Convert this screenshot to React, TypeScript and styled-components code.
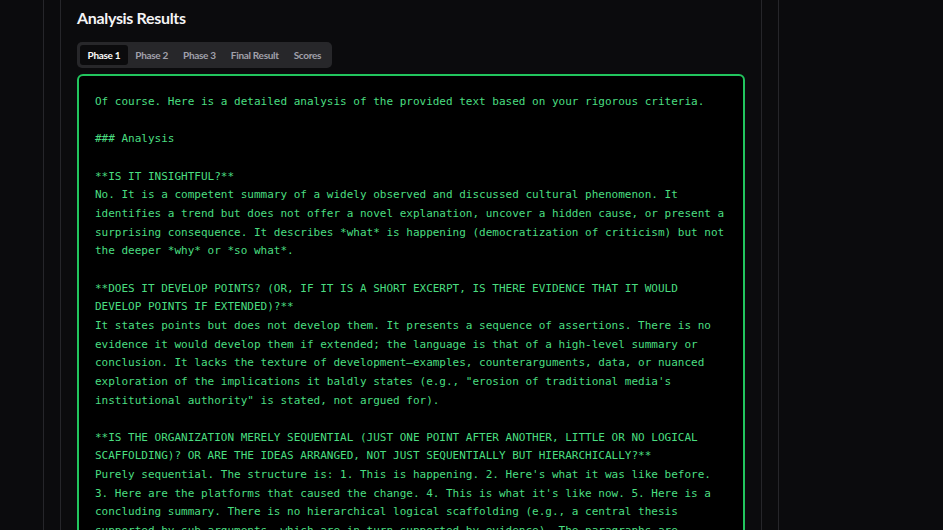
import styled, { createGlobalStyle } from "styled-components";

const GlobalStyle = createGlobalStyle`
  html, body {
    margin: 0;
    padding: 0;
    background: #0b0b0d;
    overflow: hidden;
  }
  body {
    font-family: "Lato", "Noto Sans", sans-serif;
    color: #fafafa;
  }
`;

const Page = styled.div`
  height: 530px;
  padding-left: 43px;
  overflow: hidden;
`;

const Shell = styled.section`
  width: 736px;
  box-sizing: border-box;
  min-height: 100%;
  border-left: 1px solid #26262a;
  border-right: 1px solid #26262a;
  padding: 0 16px;
`;

const Card = styled.div`
  box-sizing: border-box;
  min-height: 530px;
  border-left: 1px solid #26262a;
  border-right: 1px solid #26262a;
  padding: 6px 16px 16px;
`;

const Title = styled.h2`
  margin: 0 0 12px;
  font-size: 16px;
  line-height: 24px;
  font-weight: 700;
  letter-spacing: -0.02em;
  color: #f4f4f5;
`;

const TabList = styled.div`
  display: inline-flex;
  align-items: center;
  height: 26px;
  box-sizing: border-box;
  padding: 3px;
  border-radius: 5px;
  background: #27272a;
  margin-bottom: 6px;
`;

const Tab = styled.button<{ $active?: boolean }>`
  height: 20px;
  padding: 0 7.5px;
  border: none;
  border-radius: 3px;
  font-family: inherit;
  font-size: 10px;
  font-weight: 700;
  letter-spacing: -0.3px;
  cursor: pointer;
  background: ${(p) => (p.$active ? "#0b0b0d" : "transparent")};
  color: ${(p) => (p.$active ? "#fafafa" : "#a1a1aa")};
`;

const Output = styled.pre`
  margin: 0;
  box-sizing: border-box;
  border: 2px solid #22c55e;
  border-radius: 6px;
  background: #000;
  padding: 17px 16px 16px;
  font-family: "DejaVu Sans Mono", "Liberation Mono", monospace;
  font-size: 11px;
  line-height: 18.65px;
  color: #4ade80;
  white-space: pre-wrap;
  min-height: 600px;
`;

const tabs = ["Phase 1", "Phase 2", "Phase 3", "Final Result", "Scores"];

const analysis = `Of course. Here is a detailed analysis of the provided text based on your rigorous criteria.

### Analysis

**IS IT INSIGHTFUL?**
No. It is a competent summary of a widely observed and discussed cultural phenomenon. It
identifies a trend but does not offer a novel explanation, uncover a hidden cause, or present a
surprising consequence. It describes *what* is happening (democratization of criticism) but not
the deeper *why* or *so what*.

**DOES IT DEVELOP POINTS? (OR, IF IT IS A SHORT EXCERPT, IS THERE EVIDENCE THAT IT WOULD
DEVELOP POINTS IF EXTENDED)?**
It states points but does not develop them. It presents a sequence of assertions. There is no
evidence it would develop them if extended; the language is that of a high-level summary or
conclusion. It lacks the texture of development—examples, counterarguments, data, or nuanced
exploration of the implications it baldly states (e.g., "erosion of traditional media's
institutional authority" is stated, not argued for).

**IS THE ORGANIZATION MERELY SEQUENTIAL (JUST ONE POINT AFTER ANOTHER, LITTLE OR NO LOGICAL
SCAFFOLDING)? OR ARE THE IDEAS ARRANGED, NOT JUST SEQUENTIALLY BUT HIERARCHICALLY?**
Purely sequential. The structure is: 1. This is happening. 2. Here's what it was like before.
3. Here are the platforms that caused the change. 4. This is what it's like now. 5. Here is a
concluding summary. There is no hierarchical logical scaffolding (e.g., a central thesis
supported by sub-arguments, which are in turn supported by evidence). The paragraphs are
interchangeable in places.`;

export default function App() {
  return (
    <>
      <GlobalStyle />
      <Page>
        <Shell>
          <Card>
            <Title>Analysis Results</Title>
            <TabList>
              {tabs.map((t, i) => (
                <Tab key={t} $active={i === 0}>{t}</Tab>
              ))}
            </TabList>
            <Output>{analysis}</Output>
          </Card>
        </Shell>
      </Page>
    </>
  );
}
